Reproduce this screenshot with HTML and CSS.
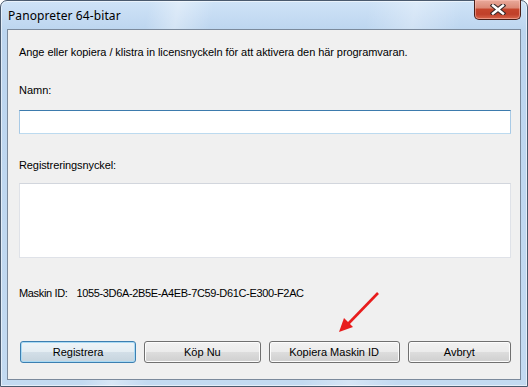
FILE: index.html
```html
<!DOCTYPE html>
<html lang="sv">
<head>
<meta charset="UTF-8">
<title>Panopreter 64-bitar</title>
<link rel="stylesheet" href="styles.css">
</head>
<body>
<div class="window">
  <div class="titlebar">
    <div class="title">Panopreter 64-bitar</div>
    <div class="close">
      <svg width="16" height="11" viewBox="0 0 16 11">
        <path d="M3 1.5 L13 9.5 M13 1.5 L3 9.5" stroke="#3a2a2a" stroke-width="4.6" stroke-linecap="square"/>
        <path d="M3 1.5 L13 9.5 M13 1.5 L3 9.5" stroke="#ffffff" stroke-width="2.4" stroke-linecap="square"/>
      </svg>
    </div>
  </div>
  <div class="client">
    <p class="intro">Ange eller kopiera / klistra in licensnyckeln för att aktivera den här programvaran.</p>
    <label class="label label-name">Namn:</label>
    <input class="name" type="text">
    <label class="label label-key">Registreringsnyckel:</label>
    <textarea class="key"></textarea>
    <p class="machine">Maskin ID:<span class="machine-id">1055-3D6A-2B5E-A4EB-7C59-D61C-E300-F2AC</span></p>
    <div class="buttons">
      <button class="btn btn-default btn-reg">Registrera</button>
      <button class="btn btn-buy">Köp Nu</button>
      <button class="btn btn-copy">Kopiera Maskin ID</button>
      <button class="btn btn-cancel">Avbryt</button>
    </div>
  </div>
  <svg class="arrow" width="60" height="60" viewBox="0 0 60 60">
    <line x1="47" y1="7" x2="17" y2="38" stroke="#e81c1c" stroke-width="2.6"/>
    <polygon points="8,46 13,32 22,41" fill="#e81c1c"/>
  </svg>
</div>
</body>
</html>
```

FILE: styles.css
```css
body {
  margin: 0;
  font-family: "Liberation Sans", Arial, sans-serif;
  font-size: 11px;
  color: #000;
  background: #fff;
}

.window {
  position: relative;
  box-sizing: border-box;
  width: 528px;
  height: 387px;
  border: 1px solid #4a5a6e;
  border-radius: 7px 7px 0 0;
  padding: 0 6px 6px 6px;
  display: flex;
  flex-direction: column;
  background:
    linear-gradient(100deg, rgba(255,255,255,0) 25%, rgba(255,255,255,0.35) 30%, rgba(255,255,255,0) 36%, rgba(255,255,255,0) 62%, rgba(255,255,255,0.3) 70%, rgba(255,255,255,0) 78%),
    linear-gradient(to bottom, #cfe3f7 0, #bcd5ef 30px, #c3daf1 100%);
  box-shadow: inset 0 0 0 1px rgba(255,255,255,0.55);
}

.titlebar {
  height: 28px;
  display: flex;
  justify-content: space-between;
  align-items: flex-start;
  flex-shrink: 0;
}

.title {
  font-family: "Noto Sans", "Open Sans", sans-serif;
  font-size: 12px;
  line-height: 14px;
  padding: 8px 0 0 1px;
  color: #000;
  letter-spacing: 0.1px;
}

.close {
  box-sizing: border-box;
  width: 47px;
  height: 20px;
  margin-top: -1px;
  border: 1px solid #4a1e17;
  border-top: none;
  border-radius: 0 0 5px 5px;
  background: linear-gradient(to bottom, #e9aa9b 0, #dc8a77 40%, #c5452c 50%, #c0402a 75%, #d8664b 100%);
  box-shadow: inset 0 0 0 1px rgba(255,200,190,0.5);
  display: flex;
  align-items: center;
  justify-content: center;
}

.client {
  box-sizing: border-box;
  flex: 1;
  background: #f0f0f0;
  border: 1px solid #7b8a9c;
  padding: 0 9px 0 11px;
  display: flex;
  flex-direction: column;
}

.intro,
.label,
.machine {
  margin: 0;
  line-height: 13px;
  display: block;
}

.intro {
  margin-top: 16px;
  letter-spacing: -0.07px;
}

.label-name {
  margin-top: 25px;
}

.name {
  box-sizing: border-box;
  width: 492px;
  height: 24px;
  margin: 13px 0 0 0;
  border: 1px solid #a8cae6;
  border-top-color: #3d7bad;
  border-bottom-color: #bcdaef;
  background: #fff;
  padding: 0;
}

.label-key {
  margin-top: 25px;
  letter-spacing: -0.1px;
}

.key {
  box-sizing: border-box;
  width: 492px;
  height: 75px;
  margin: 11px 0 0 0;
  border: 1px solid #dfe2e8;
  border-top-color: #d2d6dd;
  background: #fff;
  resize: none;
  padding: 0;
}

.machine {
  margin-top: 29px;
  letter-spacing: -0.35px;
}

.machine-id {
  margin-left: 9px;
}

.buttons {
  display: flex;
  gap: 8px;
  margin-top: 41px;
  padding-left: 1px;
}

.btn {
  box-sizing: border-box;
  height: 22px;
  padding: 0;
  font-family: "Liberation Sans", Arial, sans-serif;
  font-size: 11px;
  color: #000;
  border: 1px solid #707070;
  border-radius: 3px;
  background: linear-gradient(to bottom, #f2f2f2 0, #ebebeb 50%, #dddddd 50%, #cfcfcf 100%);
  box-shadow: inset 0 0 0 1px #fcfcfc;
}

.btn-default {
  border-color: #3c7fb1;
  background: linear-gradient(to bottom, #eef4f8 0, #e4edf3 50%, #d3dfe8 50%, #c6d4de 100%);
  box-shadow: inset 0 0 0 1px #a9daf4;
}

.btn-reg { width: 117px; }
.btn-buy { width: 117px; }
.btn-copy { width: 132px; }
.btn-cancel { width: 104px; }

.arrow {
  position: absolute;
  left: 330px;
  top: 285px;
}
```
